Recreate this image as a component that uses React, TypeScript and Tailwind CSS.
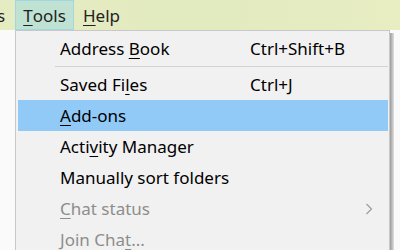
import React from 'react'

type Item = {
  label: React.ReactNode
  shortcut?: string
  active?: boolean
  disabled?: boolean
  submenu?: boolean
}

const U = ({ children }: { children: React.ReactNode }) => (
  <span className="underline underline-offset-[3px] decoration-1">{children}</span>
)

const items: (Item | 'sep')[] = [
  { label: <>Address <U>B</U>ook</>, shortcut: 'Ctrl+Shift+B' },
  'sep',
  { label: <>Saved Fi<U>l</U>es</>, shortcut: 'Ctrl+J' },
  { label: <><U>A</U>dd-ons</>, active: true },
  { label: <>Acti<U>v</U>ity Manager</> },
  { label: <>Manually sort folders</> },
  { label: <><U>C</U>hat status</>, disabled: true, submenu: true },
  { label: <>Join Cha<U>t</U>...</>, disabled: true },
]

function MenuRow({ item }: { item: Item }) {
  return (
    <div
      className={`relative flex items-center h-[31px] ${item.active ? 'bg-[#91c9f7]' : ''} ${
        item.disabled ? 'text-[#8d8d8d]' : 'text-black'
      }`}
    >
      <span className="pl-[42px] w-[232px] shrink-0">{item.label}</span>
      <span className="flex-1">{item.shortcut}</span>
      {item.submenu && (
        <svg width="8" height="12" viewBox="0 0 8 12" className="mr-[15px]">
          <path d="M1.5 1 L6.5 6 L1.5 11" fill="none" stroke="#9a9a9a" strokeWidth="1.1" />
        </svg>
      )}
    </div>
  )
}

export default function App() {
  return (
    <div className="w-[400px] h-[250px] overflow-hidden bg-[#fafafa] text-[17px] font-['Noto_Sans',sans-serif] leading-none">
      {/* menu bar */}
      <div className="h-[30px] flex items-stretch bg-gradient-to-r from-[#e6ecc2] via-[#e2eabf] to-[#e8edc2]">
        <div className="w-[15px] overflow-hidden flex items-center">
          <span className="-ml-[3px] text-[#222]">s</span>
        </div>
        <div className="w-[59px] flex items-center justify-center bg-[#c0e2d2] border border-[#a3d6e3] text-[#222]">
          <U>T</U>ools
        </div>
        <div className="pl-[9px] flex items-center text-[#222]">
          <U>H</U>elp
        </div>
      </div>

      {/* popup */}
      <div className="flex">
        <div className="w-[15px] shrink-0" />
        <div className="flex">
          <div className="w-[375px] h-[230px] bg-[#f1f1f1] border-l border-t border-r border-[#c8c8c8] pl-[2px] pr-[1px] pt-[2px]">
            {items.map((it, i) =>
              it === 'sep' ? (
                <div key={i} className="h-[5px] flex items-center pl-[37px]">
                  <div className="h-px w-full bg-[#d2d2d2]" />
                </div>
              ) : (
                <MenuRow key={i} item={it} />
              )
            )}
          </div>
          <div className="w-[4px] mt-[3px] bg-gradient-to-r from-[#9a9a9a] to-[#e0e0e0]" />
        </div>
      </div>
    </div>
  )
}
